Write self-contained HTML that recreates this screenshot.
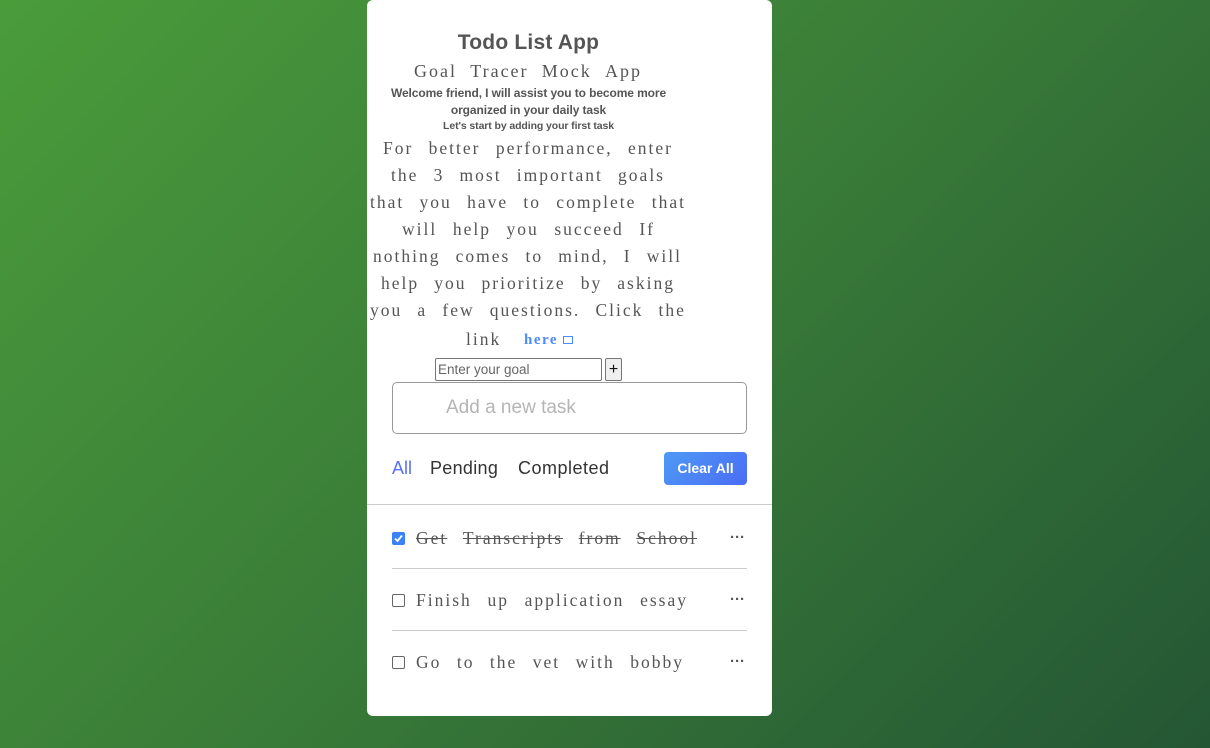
<!DOCTYPE html>
<html><head><meta charset="utf-8"><style>
*{margin:0;padding:0;box-sizing:border-box}
body{width:1210px;height:748px;overflow:hidden;background:linear-gradient(135deg,#4a9c3b 0%,#3b7f38 45%,#245634 100%);font-family:"Liberation Sans",sans-serif;position:relative}
.card{position:absolute;left:367px;top:0;width:405px;height:716px;background:#fff;border-radius:6px}
.a{position:absolute;white-space:nowrap;color:#555}
.c{text-align:center}
.ln{position:absolute;display:flex;justify-content:space-between;font-family:"Liberation Serif",serif;font-size:17.5px;letter-spacing:2px;color:#555;height:22px;line-height:22px}
.dots{position:absolute;left:363px;font-size:15px;color:#555;font-weight:bold;letter-spacing:0}
.hr{position:absolute;left:25px;width:355px;height:1px;background:#ccc}
.cb{position:absolute;left:25px;width:13px;height:13px;border:1px solid #666;border-radius:2px;background:#fff}
</style></head><body>
<div class="card">
<div class="a c" style="left:0;width:323px;top:31px;font-size:21px;font-weight:bold;color:#555;letter-spacing:0.2px">Todo List App</div>
<div class="ln" style="left:47px;width:228px;top:60px;font-size:18px"><span>Goal</span><span>Tracer</span><span>Mock</span><span>App</span></div>
<div class="a c" style="left:0;width:323px;top:85px;font-size:12px;font-weight:bold;line-height:17px;color:#555;letter-spacing:-0.1px">Welcome friend, I will assist you to become more<br>organized in your daily task</div>
<div class="a c" style="left:0;width:323px;top:120px;font-size:10.5px;font-weight:bold;color:#555;letter-spacing:-0.1px">Let's start by adding your first task</div>
<div class="ln" style="left:16px;width:290px;top:137px"><span>For</span><span>better</span><span>performance,</span><span>enter</span></div>
<div class="ln" style="left:24px;width:274px;top:164px"><span>the</span><span>3</span><span>most</span><span>important</span><span>goals</span></div>
<div class="ln" style="left:3px;width:316px;top:191px"><span>that</span><span>you</span><span>have</span><span>to</span><span>complete</span><span>that</span></div>
<div class="ln" style="left:35px;width:253px;top:218px"><span>will</span><span>help</span><span>you</span><span>succeed</span><span>If</span></div>
<div class="ln" style="left:6px;width:309px;top:245px"><span>nothing</span><span>comes</span><span>to</span><span>mind,</span><span>I</span><span>will</span></div>
<div class="ln" style="left:14px;width:294px;top:272px"><span>help</span><span>you</span><span>prioritize</span><span>by</span><span>asking</span></div>
<div class="ln" style="left:3px;width:316px;top:299px"><span>you</span><span>a</span><span>few</span><span>questions.</span><span>Click</span><span>the</span></div>
<div class="a" style="left:99px;top:329px;font-family:'Liberation Serif',serif;font-size:17.5px;letter-spacing:2px">link</div>
<div class="a" style="left:157px;top:332px;font-family:'Liberation Serif',serif;font-size:15px;font-weight:bold;letter-spacing:1.5px;color:#4d8bf5">here <span style="display:inline-block;width:10px;height:8px;border:1.3px solid #4d8bf5;vertical-align:0"></span></div>
<div class="a" style="left:68px;top:358px;width:167px;height:23px;border:1px solid #767676;border-radius:2px;font-size:13.5px;color:#666;padding:3px 2px;line-height:16px">Enter your goal</div>
<div class="a" style="left:238px;top:358px;width:17px;height:23px;border:1px solid #767676;border-radius:2px;background:#efefef;font-size:16px;color:#111;text-align:center;line-height:22px">+</div>
<div class="a" style="left:25px;top:382px;width:355px;height:52px;border:1px solid #999;border-radius:5px"></div>
<div class="a" style="left:79px;top:397px;font-size:19px;color:#b5b5b5">Add a new task</div>
<div class="a" style="left:25px;top:458px;font-size:18px;color:#5a6ff5">All</div>
<div class="a" style="left:63px;top:458px;font-size:18px;color:#333;letter-spacing:0.3px">Pending</div>
<div class="a" style="left:151px;top:458px;font-size:18px;color:#333;letter-spacing:0.5px">Completed</div>
<div class="a" style="left:297px;top:452px;width:83px;height:33px;border-radius:4px;background:linear-gradient(135deg,#4e9af5,#4a6cf5);color:#fff;font-size:14px;font-weight:bold;text-align:center;line-height:33px">Clear All</div>
<div class="a" style="left:0;top:504px;width:405px;height:1px;background:#ccc"></div>
<div class="cb" style="top:532px;background:#3b82f6;border-color:#3b82f6"><svg width="11" height="11" viewBox="0 0 11 11" style="position:absolute;left:0;top:0"><path d="M2 5.5L4.5 8L9 2.5" stroke="#fff" stroke-width="1.8" fill="none"/></svg></div>
<div class="ln" style="left:49px;width:281px;top:527px;text-decoration:line-through"><span>Get</span><span>Transcripts</span><span>from</span><span>School</span></div>
<div class="a dots" style="top:529px">···</div>
<div class="hr" style="top:568px"></div>
<div class="cb" style="top:594px"></div>
<div class="ln" style="left:49px;width:272px;top:589px"><span>Finish</span><span>up</span><span>application</span><span>essay</span></div>
<div class="a dots" style="top:591px">···</div>
<div class="hr" style="top:630px"></div>
<div class="cb" style="top:656px"></div>
<div class="ln" style="left:49px;width:268px;top:651px"><span>Go</span><span>to</span><span>the</span><span>vet</span><span>with</span><span>bobby</span></div>
<div class="a dots" style="top:653px">···</div>
</div>
</body></html>
